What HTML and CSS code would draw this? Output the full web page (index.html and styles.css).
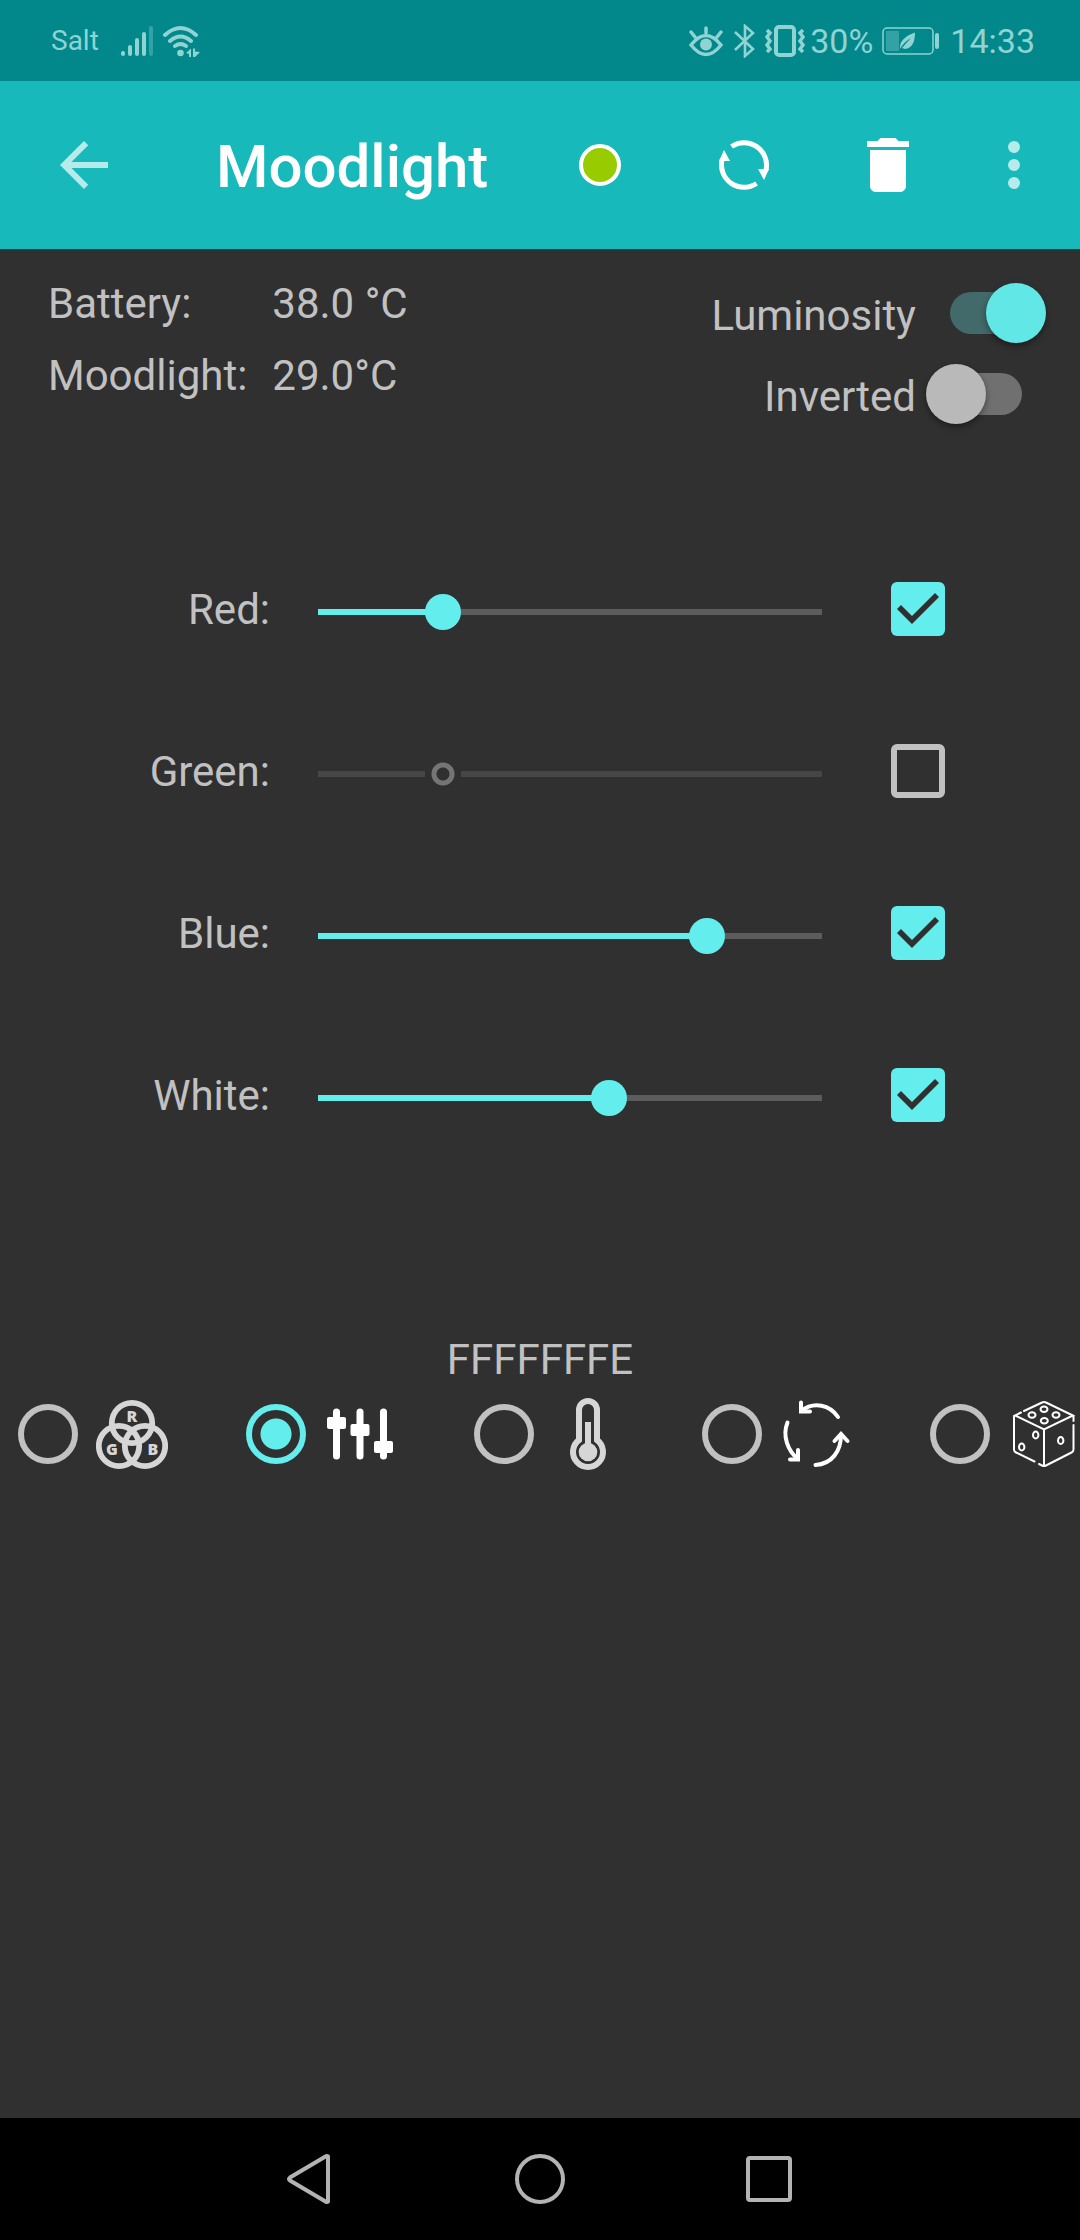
FILE: index.html
```html
<!DOCTYPE html>
<html lang="en">
<head>
<meta charset="utf-8">
<meta name="viewport" content="width=device-width">
<title>Moodlight</title>
<link rel="stylesheet" href="styles.css">
</head>
<body>
<div class="status">
  <span class="carrier">Salt</span>
  <svg class="signal" width="34" height="32" viewBox="0 0 34 32" fill="none" stroke="currentColor" stroke-width="4" stroke-linecap="round"><path d="M3 28v1M10 22v7M17 15v14M24 9v20"/><path opacity=".35" d="M31 3v26"/></svg>
  <svg width="38" height="32" viewBox="0 0 38 32" fill="none" stroke="currentColor" stroke-width="4" stroke-linecap="round"><path d="M3 10Q18.500-4 34 10M8 16Q18.500 7 29 16M13 21Q18.500 17 24 21"/><circle cx="18.500" cy="28" r="3.300" fill="currentColor" stroke="none"/><path fill="currentColor" stroke="none" d="M24 28l5-4.500V32h-2v-3zM31 23.500h2v3l5 .5-5 5h-2z"/></svg>
  <span class="spacer"></span>
  <svg width="34" height="32" viewBox="0 0 34 32" fill="none" stroke="currentColor" stroke-width="3.500" stroke-linecap="round"><path d="M2 20Q17 1 32 20Q17 39 2 20ZM17 8V3M6 12L2 7M28 12l4-5"/><circle cx="17" cy="19.500" r="6" fill="currentColor" stroke="none"/></svg>
  <svg class="bluetooth" width="21" height="34" viewBox="0 0 21 34" fill="none" stroke="currentColor" stroke-width="2.600"><path d="M1 8l18 17-8 7V2l8 7L1 26"/></svg>
  <svg class="vibrate" width="42" height="34" viewBox="0 0 42 34" fill="none" stroke="currentColor" stroke-width="4"><rect x="12" y="3" width="18" height="28" rx="3"/><path stroke-width="3.500" d="M3 6l3 3-3 4 3 4-3 4 3 4-3 3M39 6l-3 3 3 4-3 4 3 4-3 4 3 3"/></svg>
  <span class="clock">30%</span>
  <svg class="battery" width="60" height="30" viewBox="0 0 60 30"><rect x="2" y="2" width="50" height="26" rx="4" fill="none" stroke="currentColor" stroke-width="1.500"/><path fill="currentColor" opacity=".35" d="M5 5h13v20H5z"/><path fill="currentColor" d="M19 23q-1-11 15-16.500Q34 22 24 23l-3-1q5-6 9-10-7 4-11 11z"/><rect x="54" y="7" width="4" height="16" rx="2" fill="currentColor"/></svg>
  <span class="clock">14:33</span>
</div>

<header class="appbar">
  <button class="back" aria-label="Back"><svg width="72" height="72" viewBox="0 0 24 24" fill="currentColor"><path d="M20 11H7.830l5.590-5.590L12 4l-8 8 8 8 1.410-1.410L7.830 13H20v-2z"/></svg></button>
  <h1 class="title">Moodlight</h1>
  <button class="action" aria-label="Color"><svg width="72" height="72" viewBox="0 0 72 72"><circle cx="36" cy="36" r="19" fill="#9c0" stroke="#fff" stroke-width="4"/></svg></button>
  <button class="action" aria-label="Refresh"><svg width="72" height="72" viewBox="0 0 72 72"><path d="M23.500 17.500A22.500 22.500 0 0 1 58 41M48.500 54.500A22.500 22.500 0 0 1 14 31" fill="none" stroke="currentColor" stroke-width="5"/><path fill="currentColor" d="M50 40h11l-5 11zM22 32H11l5-11z"/></svg></button>
  <button class="action" aria-label="Delete"><svg width="72" height="72" viewBox="0 0 24 24" fill="currentColor"><path d="M6 19c0 1.100.9 2 2 2h8c1.100 0 2-.9 2-2V7H6v12zM19 4h-3.500l-1-1h-5l-1 1H5v2h14V4z"/></svg></button>
  <button class="more" aria-label="More options"><svg width="72" height="72" viewBox="0 0 24 24" fill="currentColor"><circle cx="12" cy="6" r="2"/><circle cx="12" cy="12" r="2"/><circle cx="12" cy="18" r="2"/></svg></button>
</header>

<main class="content">
  <section class="overview">
    <dl class="temps">
      <dt>Battery:</dt><dd>38.0 °C</dd>
      <dt>Moodlight:</dt><dd>29.0°C</dd>
    </dl>
    <div class="switches">
      <div class="switch-row"><label class="switch-label" for="luminosity">Luminosity</label><input class="switch" type="checkbox" role="switch" id="luminosity" checked></div>
      <div class="switch-row"><label class="switch-label" for="inverted">Inverted</label><input class="switch" type="checkbox" role="switch" id="inverted"></div>
    </div>
  </section>

  <section class="channels">
    <div class="channel"><label class="channel-name" for="red">Red:</label><input class="slider" type="range" id="red" min="0" max="1000" value="248" style="--value:.248"><input class="tick" type="checkbox" aria-label="Red on" checked></div>
    <div class="channel"><label class="channel-name" for="green">Green:</label><input class="slider" type="range" id="green" min="0" max="1000" value="248" style="--value:.248" disabled><input class="tick" type="checkbox" aria-label="Green on"></div>
    <div class="channel"><label class="channel-name" for="blue">Blue:</label><input class="slider" type="range" id="blue" min="0" max="1000" value="772" style="--value:.772"><input class="tick" type="checkbox" aria-label="Blue on" checked></div>
    <div class="channel"><label class="channel-name" for="white">White:</label><input class="slider" type="range" id="white" min="0" max="1000" value="577" style="--value:.577"><input class="tick" type="checkbox" aria-label="White on" checked></div>
  </section>

  <p class="code">FFFFFFFE</p>

  <section class="modes">
    <label class="mode"><input class="radio" type="radio" name="mode" aria-label="RGB">
      <svg class="dim" width="72" height="72" viewBox="0 0 72 72"><g fill="none" stroke="currentColor" stroke-width="5.800"><circle cx="36" cy="25" r="20.200"/><circle cx="23" cy="48" r="20.200"/><circle cx="49" cy="48" r="20.200"/></g><g class="rgb" fill="currentColor"><text x="36" y="24">R</text><text x="16" y="57">G</text><text x="57" y="57">B</text></g></svg></label>
    <label class="mode"><input class="radio" type="radio" name="mode" aria-label="Sliders" checked>
      <svg width="72" height="72" viewBox="0 0 72 72" fill="currentColor"><rect x="9" y="10.500" width="7" height="51" rx="3.500"/><rect x="32.500" y="10.500" width="7" height="51" rx="3.500"/><rect x="56" y="10.500" width="7" height="51" rx="3.500"/><rect x="3" y="19" width="19" height="12" rx="2"/><rect x="26.500" y="26" width="19" height="12" rx="2"/><rect x="50" y="43" width="19" height="12" rx="2"/></svg></label>
    <label class="mode"><input class="radio" type="radio" name="mode" aria-label="Temperature">
      <svg class="dim" width="72" height="72" viewBox="0 0 72 72"><path d="M27 12a9 9 0 0 1 18 0V42A15 15 0 1 1 27 42Z" fill="none" stroke="currentColor" stroke-width="6"/><path fill="currentColor" d="M33 24h6v24h-6z"/><circle cx="36" cy="54" r="9.300" fill="currentColor"/></svg></label>
    <label class="mode"><input class="radio" type="radio" name="mode" aria-label="Cycle">
      <svg width="72" height="72" viewBox="0 0 72 72" fill="none" stroke="currentColor" stroke-width="4" stroke-linecap="round"><path d="M58 19C50 7 34 3 21 13M7.500 24.500C2 38 8 53 18 61M35.500 67C52 66 61 53 61 37"/><path d="M21 4.500V13.500H30M18 52v9.500H10M54.500 43l6.500-7 6.500 7"/></svg></label>
    <label class="mode"><input class="radio" type="radio" name="mode" aria-label="Random">
      <svg width="72" height="72" viewBox="0 0 72 72" fill="none" stroke="currentColor" stroke-width="2" stroke-linecap="round"><path d="M16 13l18-8.500q2-1 4 0L65 17.500 36 31.500 7 17.500l6-3M36 31.500V68M65.500 18v5M65.500 27V51.500q0 2-2 3L38 67.500q-2 1-4 0l-3-1.500M26.500 63.500L8 54.500q-2-1-2-3V18"/><ellipse cx="24" cy="17" rx="3.500" ry="2.700"/><ellipse cx="36" cy="11.300" rx="3.500" ry="2.700"/><ellipse cx="48" cy="17" rx="3.500" ry="2.700"/><ellipse cx="36.300" cy="22.700" rx="3.500" ry="2.700"/><ellipse cx="27.700" cy="37" rx="2.700" ry="3.500"/><ellipse cx="13.700" cy="49" rx="2.700" ry="3.500"/><ellipse cx="52.700" cy="42.500" rx="2.700" ry="3.500"/></svg></label>
  </section>
</main>

<nav class="navbar">
  <button class="nav" aria-label="Back"><svg width="60" height="60" viewBox="0 0 60 60"><path d="M46 7.500v45q-1 1-2.500 0L8 31.500q-2-1.500 0-3L43.500 7.500q1.500-1 2.500 0z"/></svg></button>
  <button class="nav" aria-label="Home"><svg width="60" height="60" viewBox="0 0 60 60"><circle cx="30" cy="30" r="23"/></svg></button>
  <button class="nav" aria-label="Recent apps"><svg width="60" height="60" viewBox="0 0 60 60"><rect x="10" y="9" width="42" height="42" rx="2"/></svg></button>
</nav>
</body>
</html>
```
FILE: styles.css
```css
:root {
  --surface: #303030;
  --text: #c1c1c1;
  --accent: #64eded;
}

* {
  box-sizing: border-box;
}

body {
  margin: 0;
  min-height: 100vh;
  display: flex;
  flex-direction: column;
  background: var(--surface);
  color: var(--text);
  font: 42px/50px Roboto, sans-serif;
}

svg {
  display: block;
  flex: none;
}

button {
  display: flex;
  align-items: center;
  justify-content: center;
  padding: 0;
  border: 0;
  background: none;
  color: #fff;
}

input {
  appearance: none;
  margin: 0;
  flex: none;
}

/* Status bar */
.status {
  display: flex;
  align-items: center;
  height: 81px;
  padding: 0 45px 0 51px;
  background: #02878a;
  color: #8fd3d3;
}

.carrier {
  font-size: 28px;
}

.signal {
  margin: 0 8px 0 21px;
}

.spacer {
  flex: 1;
}

.bluetooth {
  margin: 0 9px 0 11px;
}

.clock {
  font-size: 34px;
}

.vibrate {
  margin-right: 4px;
}

.battery {
  margin: 0 9px 0 8px;
}

/* App bar */
.appbar {
  display: flex;
  align-items: center;
  height: 168px;
  padding: 0 12px 0 48px;
  background: #17b9bb;
  box-shadow: 0 2px 0 #223738;
}

.back,
.more {
  color: #b5ebeb;
}

.title {
  flex: 1;
  margin: 0 0 0 96px;
  padding-top: 4px;
  color: #fff;
  font-size: 60px;
  font-weight: 500;
  line-height: 72px;
}

.action {
  width: 144px;
  height: 144px;
}

.more {
  width: 108px;
  height: 144px;
}

/* Temperatures and switches */
.content {
  flex: 1;
}

.overview {
  display: flex;
  justify-content: space-between;
  align-items: flex-start;
  padding: 19px 34px 0 48px;
}

.temps {
  display: grid;
  grid-template-columns: auto auto;
  column-gap: 25px;
  margin: 0;
  line-height: 72px;
}

.temps dd {
  margin: 0;
}

.switches {
  padding-top: 4px;
}

.switch-row {
  display: flex;
  align-items: center;
  justify-content: flex-end;
  gap: 10px;
  height: 81px;
}

.switch-label {
  padding-top: 6px;
}

.switch {
  display: grid;
  align-items: center;
  width: 120px;
  height: 60px;
}

.switch::before,
.switch::after {
  content: "";
  grid-area: 1 / 1;
}

.switch::before {
  justify-self: center;
  width: 72px;
  height: 42px;
  border-radius: 21px;
  background: #707070;
}

.switch::after {
  justify-self: start;
  width: 60px;
  height: 60px;
  border-radius: 50%;
  background: #b9b9b9;
  box-shadow: 0 3px 6px rgba(0, 0, 0, .4);
}

.switch:checked::before {
  background: #426a6a;
}

.switch:checked::after {
  justify-self: end;
  background: #62e7e7;
}

/* Color channels */
.channels {
  padding-top: 94px;
}

.channel {
  display: flex;
  align-items: center;
  height: 162px;
}

.channel-name {
  width: 25%;
  padding-top: 2px;
  text-align: right;
}

.slider {
  flex: 1;
  min-width: 0;
  height: 36px;
  margin: 6px 0 0 30px;
  background:
    linear-gradient(var(--accent), var(--accent)) 18px 50% / calc((100% - 36px) * var(--value)) 6px no-repeat,
    linear-gradient(#5c5c5c, #5c5c5c) 50% 50% / calc(100% - 36px) 6px no-repeat;
}

.slider::-webkit-slider-thumb {
  appearance: none;
  width: 36px;
  height: 36px;
  border-radius: 50%;
  background: var(--accent);
}

.slider:disabled {
  background: linear-gradient(#464646, #464646) 50% 50% / calc(100% - 36px) 6px no-repeat;
}

.slider:disabled::-webkit-slider-thumb {
  border: 6px solid var(--surface);
  border-radius: 0;
  background: radial-gradient(circle, var(--surface) 6px, #757575 7px, #757575 11px, var(--surface) 12px);
}

.tick {
  width: 54px;
  height: 54px;
  margin: 0 135px 0 51px;
  border: 6px solid var(--text);
  border-radius: 6px;
}

.tick:checked {
  border: 0;
  background: var(--accent);
}

.tick:checked::after {
  content: "";
  display: block;
  height: 54px;
  background: var(--surface);
  clip-path: polygon(6px 27px, 10px 23px, 21px 34px, 44px 11px, 48px 15px, 21px 42px);
}

/* Mode picker */
.code {
  margin: 159px 0 13px;
  text-align: center;
}

.modes {
  display: flex;
  justify-content: space-between;
  padding-left: 18px;
}

.mode {
  display: flex;
  align-items: center;
  gap: 18px;
  color: #fff;
}

.radio {
  width: 60px;
  height: 60px;
  border: 6px solid var(--text);
  border-radius: 50%;
}

.radio:checked {
  border-color: var(--accent);
  background: radial-gradient(circle, var(--accent) 15px, transparent 16px);
}

.dim {
  color: #d6d6d6;
}

.rgb {
  font: 800 16px/16px "Open Sans", sans-serif;
  text-anchor: middle;
}

/* System navigation */
.navbar {
  display: flex;
  justify-content: center;
  gap: 168px;
  padding: 31px 0;
  background: #000;
}

.nav svg {
  fill: none;
  stroke: #b3b3b3;
  stroke-width: 4;
}
```
